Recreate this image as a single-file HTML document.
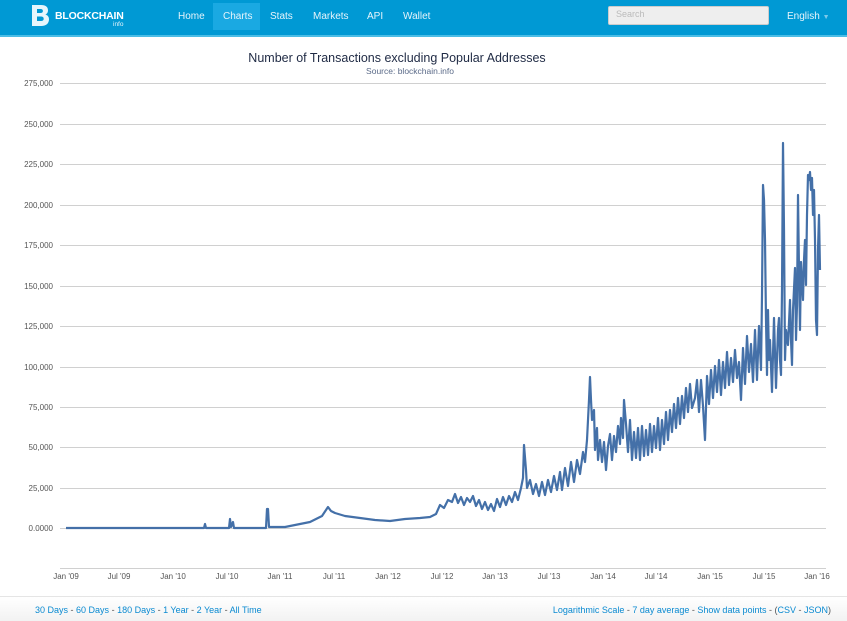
<!DOCTYPE html>
<html><head><meta charset="utf-8"><style>
*{margin:0;padding:0;box-sizing:border-box}
body{width:847px;height:621px;background:#fff;font-family:"Liberation Sans",sans-serif;position:relative;overflow:hidden}
.nav{position:absolute;left:0;top:0;width:847px;height:37px;background:#0099d4;border-bottom:2px solid #4bbde6}
.nav a{position:absolute;top:0;height:30px;line-height:33px;color:#e6f4fb;font-size:10px;text-decoration:none}
.logo{position:absolute;left:29px;top:3px;color:#fff}
.search{position:absolute;left:608px;top:6px;width:161px;height:19px;background:#eee;border:1px solid #ccc;border-radius:2px;font-size:9px;color:#bbb;padding:2px 7px}
.footer{position:absolute;left:0;top:596px;width:847px;height:25px;background:linear-gradient(#fff,#f2f2f2);border-top:1px solid #e5e5e5;font-size:9px;color:#555}
.footer span{position:absolute;top:8px}
.footer b{font-weight:normal;color:#0a8ad1}
</style></head><body>
<div class="nav">
<div class="logo"><svg width="22" height="26" viewBox="0 0 22 26"><path d="M3 2h9c5 0 7 2 7 5.5 0 2-1 3.3-2.6 4 2.3.7 3.6 2.3 3.6 4.7C20 20 17.5 23 12 23H3z" fill="#e6f6fc"/><path d="M8 6h3.5c1.6 0 2.4.7 2.4 2s-.8 2-2.4 2H8zM8 13.5h4c1.8 0 2.7.8 2.7 2.2S13.8 18 12 18H8z" fill="#0099d4"/></svg></div>
<div style="position:absolute;left:55px;top:10px;color:#fff;font-weight:bold;font-size:10.5px;letter-spacing:-0.2px">BLOCKCHAIN</div>
<div style="position:absolute;left:113px;top:21px;color:#e6f6fc;font-size:6.5px">info</div>
<a style="left:178px">Home</a>
<div style="position:absolute;left:213px;top:3px;width:47px;height:27px;background:#1aa9e2"></div>
<a style="left:223px">Charts</a>
<a style="left:270px">Stats</a>
<a style="left:313px">Markets</a>
<a style="left:367px">API</a>
<a style="left:403px">Wallet</a>
<div class="search">Search</div>
<a style="left:787px">English <span style="color:#7cc9ea;font-size:7px">▼</span></a>
</div>
<div style="position:absolute;left:0;top:51px;width:794px;text-align:center;font-size:12.5px;color:#1f2a44">Number of Transactions excluding Popular Addresses</div>
<div style="position:absolute;left:0;top:66px;width:820px;text-align:center;font-size:8.5px;color:#5a6a88">Source: blockchain.info</div>
<svg style="position:absolute;left:0;top:0" width="847" height="600">
<g stroke="#d0d0d0" stroke-width="1">
<line x1="60" y1="83.5" x2="826" y2="83.5"/><line x1="60" y1="124.5" x2="826" y2="124.5"/><line x1="60" y1="164.5" x2="826" y2="164.5"/><line x1="60" y1="205.5" x2="826" y2="205.5"/><line x1="60" y1="245.5" x2="826" y2="245.5"/><line x1="60" y1="286.5" x2="826" y2="286.5"/><line x1="60" y1="326.5" x2="826" y2="326.5"/><line x1="60" y1="367.5" x2="826" y2="367.5"/><line x1="60" y1="407.5" x2="826" y2="407.5"/><line x1="60" y1="447.5" x2="826" y2="447.5"/><line x1="60" y1="488.5" x2="826" y2="488.5"/><line x1="60" y1="528.5" x2="826" y2="528.5"/>
<line x1="60" y1="568.5" x2="826" y2="568.5"/>
</g>
<g font-size="8" fill="#555" text-anchor="end">
<text x="53" y="86">275,000</text><text x="53" y="127">250,000</text><text x="53" y="167">225,000</text><text x="53" y="208">200,000</text><text x="53" y="248">175,000</text><text x="53" y="289">150,000</text><text x="53" y="329">125,000</text><text x="53" y="370">100,000</text><text x="53" y="410">75,000</text><text x="53" y="450">50,000</text><text x="53" y="491">25,000</text><text x="53" y="531">0.0000</text>
</g>
<g font-size="8" fill="#555" text-anchor="middle">
<text x="66" y="579">Jan '09</text><text x="119" y="579">Jul '09</text><text x="173" y="579">Jan '10</text><text x="227" y="579">Jul '10</text><text x="280" y="579">Jan '11</text><text x="334" y="579">Jul '11</text><text x="388" y="579">Jan '12</text><text x="442" y="579">Jul '12</text><text x="495" y="579">Jan '13</text><text x="549" y="579">Jul '13</text><text x="603" y="579">Jan '14</text><text x="656" y="579">Jul '14</text><text x="710" y="579">Jan '15</text><text x="764" y="579">Jul '15</text><text x="817" y="579">Jan '16</text>
</g>
<polyline fill="none" stroke="#4470a8" stroke-width="2.2" stroke-linejoin="round" points="
66,528 200,528 204,528 205,524 206,528 229,528 230,519 231,527 233,522 234,528 266,528 267,509 268,509 269,527 285,527 300,524 310,522 318,518 322,516 326,510 328,507 331,511 335,513 345,516 360,518 375,520 390,521 405,519 420,518 430,517 436,514 440,505 444,508 448,500 452,502 455,494 458,503 461,497 464,505 467,498 470,502 473,496 476,506 479,500 482,509 485,502 488,510 491,504 494,511 497,499 500,507 503,497 506,505 509,496 512,502 515,492 518,500 521,488 523,478 524,445 526,470 527,488 530,480 533,494 536,484 539,496 542,482 545,495 548,480 551,492 554,476 557,490 560,472 562,490 565,468 568,486 571,462 574,482 577,460 580,474 583,452 585,462 587,440 589,400 590,377 591,400 592,420 594,410 595,450 597,428 598,460 600,440 602,462 604,442 606,470 608,446 610,434 612,460 614,436 616,452 618,426 620,444 621,418 623,438 624,400 626,424 628,452 630,420 632,460 634,432 636,458 638,428 640,460 642,426 644,456 646,430 648,455 650,424 652,452 654,426 656,448 658,418 660,450 662,420 664,444 666,412 668,440 670,410 672,432 674,404 676,428 678,398 680,424 682,396 684,418 686,388 688,412 690,384 692,408 695,398 697,380 699,412 701,380 703,406 705,440 707,376 709,404 711,370 713,398 715,366 717,392 719,360 721,395 723,362 725,388 727,352 729,385 731,358 733,382 735,350 737,378 739,362 741,400 743,348 745,384 747,336 749,372 751,344 753,382 755,330 757,380 759,326 761,370 762,295 763,185 764,200 765,240 766,320 767,375 768,310 769,360 770,340 772,392 774,318 776,388 778,330 779,318 780,360 781,375 782,290 783,143 784,230 785,360 786,330 788,345 790,300 791,340 792,365 793,310 795,268 796,340 797,305 798,195 799,270 800,330 801,262 803,300 804,260 805,240 806,285 807,215 808,175 809,180 810,172 811,190 812,178 813,215 814,190 815,240 816,320 817,335 818,250 819,215 820,270"/>
</svg>
<div class="footer">
<span style="left:35px"><b>30 Days</b> - <b>60 Days</b> - <b>180 Days</b> - <b>1 Year</b> - <b>2 Year</b> - <b>All Time</b></span>
<span style="right:16px"><b>Logarithmic Scale</b> - <b>7 day average</b> - <b>Show data points</b> - (<b>CSV</b> - <b>JSON</b>)</span>
</div>
</body></html>
